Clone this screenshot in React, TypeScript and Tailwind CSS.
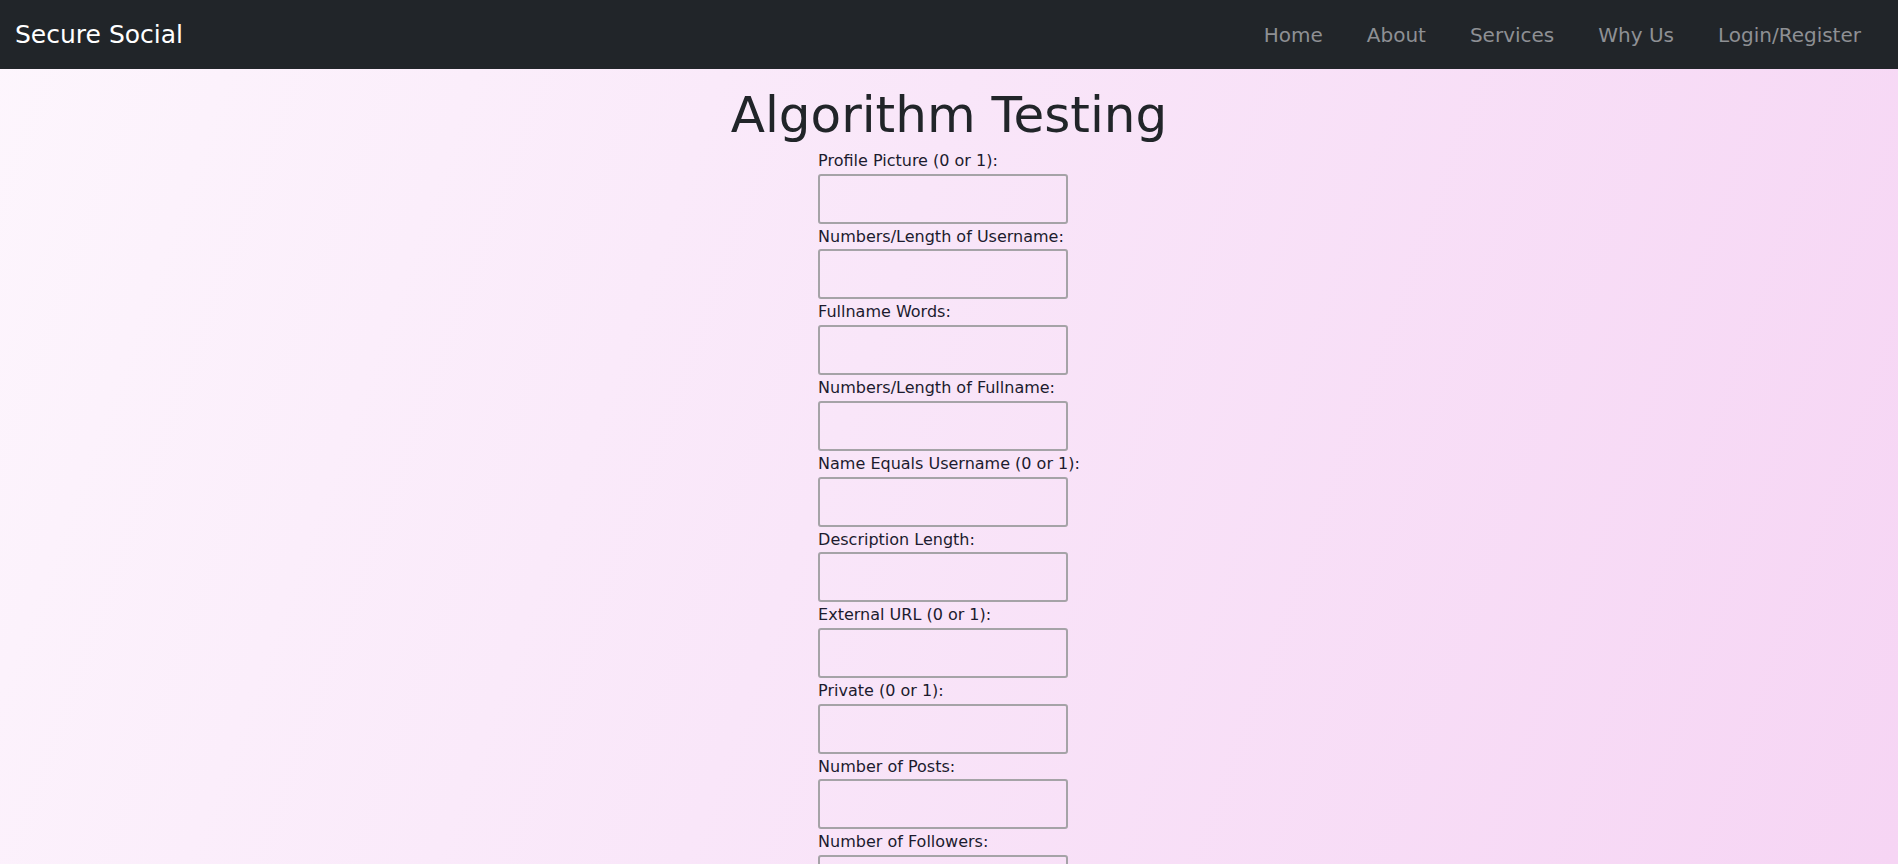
const fields = [
  "Profile Picture (0 or 1):",
  "Numbers/Length of Username:",
  "Fullname Words:",
  "Numbers/Length of Fullname:",
  "Name Equals Username (0 or 1):",
  "Description Length:",
  "External URL (0 or 1):",
  "Private (0 or 1):",
  "Number of Posts:",
  "Number of Followers:",
  "Number of Follows:",
];

const navLinks = ["Home", "About", "Services", "Why Us", "Login/Register"];

function Navbar() {
  return (
    <nav className="flex h-[69px] items-center justify-between bg-[#212529] pl-[15px] pr-[37px]">
      <a href="#" className="text-[25px] text-white">
        Secure Social
      </a>
      <ul className="flex items-center gap-[44px]">
        {navLinks.map((link) => (
          <li key={link}>
            <a href="#" className="text-[20px] leading-[30px] text-[#8e9094]">
              {link}
            </a>
          </li>
        ))}
      </ul>
    </nav>
  );
}

export default function App() {
  return (
    <div className="min-h-screen bg-[linear-gradient(110deg,#fdf6fd_0%,#f9e6f9_45%,#f6d5f4_100%)] bg-fixed font-['DejaVu_Sans',sans-serif]">
      <Navbar />
      <main className="flex flex-col items-center pb-10">
        <h1 className="mt-[16px] mb-[3px] text-[50px] leading-[60px] text-[#212529]">Algorithm Testing</h1>
        <form className="flex w-fit flex-col" onSubmit={(e) => e.preventDefault()}>
          {fields.map((label) => (
            <label key={label} className="flex flex-col">
              <span className="whitespace-nowrap text-[16px] leading-[25.7px] text-[#1c1b2e]">{label}</span>
              <input
                type="text"
                className="h-[50px] w-[250px] rounded-[3px] border-2 border-[#a5a3a7] bg-transparent px-2 outline-none"
              />
            </label>
          ))}
          <button type="submit" className="mt-4 w-fit rounded border-2 border-[#a5a3a7] px-4 py-2 text-[16px] text-[#1c1b2e]">
            Submit
          </button>
        </form>
      </main>
    </div>
  );
}
